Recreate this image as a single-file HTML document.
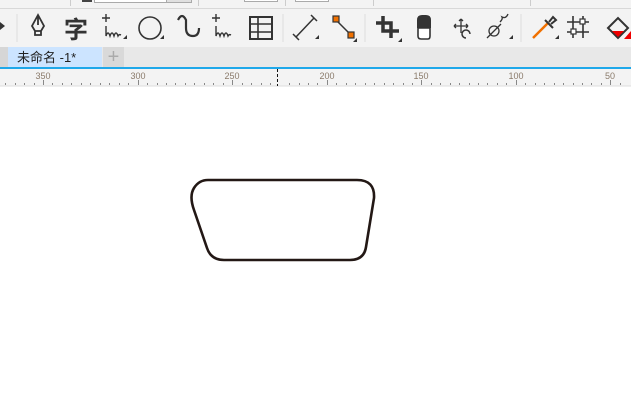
<!DOCTYPE html>
<html><head><meta charset="utf-8"><style>
body{margin:0;width:631px;height:416px;overflow:hidden;background:#fff;font-family:"Liberation Sans","Noto Sans CJK SC",sans-serif;position:relative}
.a{position:absolute}
</style></head><body>
<div class="a" style="left:0;top:0;width:631px;height:68px;background:#f3f3f3"></div>
<div class="a" style="left:0;top:8px;width:631px;height:1px;background:#d8d8d8"></div>
<div class="a" style="left:94px;top:0;width:72px;height:2px;background:#fff;border:1px solid #aaa;border-top:0"></div>
<div class="a" style="left:166px;top:0;width:24px;height:2px;background:#e0e0e0;border:1px solid #aaa;border-top:0"></div>
<div class="a" style="left:82px;top:0;width:10px;height:2px;background:#444"></div>
<div class="a" style="left:244px;top:0;width:32px;height:1px;background:#fff;border:1px solid #aaa;border-top:0"></div>
<div class="a" style="left:295px;top:0;width:32px;height:1px;background:#fff;border:1px solid #aaa;border-top:0"></div>
<div class="a" style="left:70px;top:0;width:1px;height:6px;background:#ccc"></div>
<div class="a" style="left:198px;top:0;width:1px;height:6px;background:#ccc"></div>
<div class="a" style="left:285px;top:0;width:1px;height:6px;background:#ccc"></div>
<div class="a" style="left:373px;top:0;width:1px;height:6px;background:#ccc"></div>
<div class="a" style="left:530px;top:0;width:1px;height:6px;background:#ccc"></div>
<svg class="a" style="left:0;top:9px" width="631" height="38" viewBox="0 9 631 38" fill="none" stroke="#333" stroke-width="2">
<path d="M0 22 L5 26 L0 30Z" fill="#333" stroke="none"/>
<line x1="17" y1="14" x2="17" y2="42" stroke="#ddd" stroke-width="1"/>
<path d="M38 15 L32 26 L35 31 L41 31 L44 26 Z M38 15 V25 M35 31 v4 h6 v-4" stroke-width="1.8"/>
<text x="64" y="38" font-size="24" font-weight="bold" fill="#333" stroke="none" font-family="Noto Sans CJK SC,sans-serif">字</text>
<path d="M106 14 v8 M102 18 h8 M106 26 v10 q2 -6 4 0 q2 -6 4 0 q2 -6 4 0 q1 -2 3 -1" stroke-width="1.4"/>
<path d="M123 39 l4 0 l0 -4z" fill="#333" stroke="none"/>
<circle cx="150" cy="28" r="11" stroke-width="1.6"/>
<path d="M160 39 l4 0 l0 -4z" fill="#333" stroke="none"/>
<path d="M178 20 q4 -8 8 0 v8 q0 8 7 8 q6 0 6 -8" stroke-width="2.2"/>
<path d="M216 14 v8 M212 18 h8 M216 26 v10 q2 -6 4 0 q2 -6 4 0 q2 -6 4 0 q1 -2 3 -1" stroke-width="1.4"/>
<rect x="250" y="17" width="22" height="22" stroke-width="2"/>
<path d="M250 24 h22 M250 32 h22 M258 17 v22" stroke-width="1.6"/>
<line x1="283" y1="14" x2="283" y2="42" stroke="#ddd" stroke-width="1"/>
<path d="M296 37 L314 18 M293 34 l6 6 M311 15 l6 6" stroke-width="1.5"/>
<path d="M315 39 l4 0 l0 -4z" fill="#333" stroke="none"/>
<path d="M337 21 L351 35" stroke-width="1.5"/>
<rect x="333" y="16" width="6" height="6" fill="#f07000" stroke-width="1.2"/>
<rect x="348" y="32" width="6" height="6" fill="#f07000" stroke-width="1.2"/>
<path d="M353 42 l4 0 l0 -4z" fill="#333" stroke="none"/>
<line x1="365" y1="14" x2="365" y2="42" stroke="#ddd" stroke-width="1"/>
<path d="M376 23 h15 v15 M383 16 v15 h16" stroke-width="3.5"/>
<path d="M398 42 l4 0 l0 -4z" fill="#333" stroke="none"/>
<path d="M417 28 v-8 q0 -5 5 -5 h4 q5 0 5 5 v8z" fill="#333" stroke="none"/>
<path d="M418 28 v8 q0 3 3 3 h7 q2 0 2 -3 v-8z" stroke-width="1.6" stroke="#333" fill="#fff"/>
<path d="M461 19 v14 M454 26 h14 M461 19 l-2 2 M461 19 l2 2 M454 26 l2 -2 M454 26 l2 2 M468 26 l-2 -2 M468 26 l-2 2" stroke-width="1.3"/>
<path d="M470 34 a4 4 0 1 0 -4 4" stroke-width="1.5"/>
<circle cx="494" cy="31" r="5" stroke-width="1.3"/>
<path d="M487 38 L501 24 M500 22 q3 -3 2 -5 q4 2 6 -3" stroke-width="1.3"/>
<path d="M509 39 l4 0 l0 -4z" fill="#333" stroke="none"/>
<line x1="521" y1="14" x2="521" y2="42" stroke="#ddd" stroke-width="1"/>
<path d="M533 38 L548 23" stroke="#f07000" stroke-width="2.5"/>
<path d="M545 20 l8 8 M549 22 l4 -5 l3 3 l-5 4" stroke-width="2"/>
<path d="M555 39 l4 0 l0 -4z" fill="#333" stroke="none"/>
<path d="M567 22 h22 M567 32 h22 M573 16 v22 M583 16 v22" stroke-width="1.6"/>
<rect x="580" y="19" width="5" height="5" fill="#fff" stroke-width="1.2"/>
<rect x="571" y="29" width="5" height="5" fill="#fff" stroke-width="1.2"/>
<path d="M608 28 L618 18 L628 28 L618 38 Z" stroke-width="2"/>
<path d="M612 31 h12 l-6 6z" fill="#e00" stroke="none"/>
<path d="M624 39 l7 -8 v8z" fill="#e00" stroke="none"/>
</svg>
<div class="a" style="left:0;top:47px;width:631px;height:21px;background:#e8e8e8"></div>
<div class="a" style="left:0;top:47px;width:8px;height:21px;background:#d6d6d6"></div>
<div class="a" style="left:8px;top:47px;width:94px;height:21px;background:#cce4ff;font-size:13px;line-height:21px;color:#222;text-indent:9px">未命名 -1*</div>
<div class="a" style="left:103px;top:47px;width:21px;height:21px;background:#d9d9d9;color:#aaa;font-size:20px;line-height:20px;text-align:center">+</div>
<div class="a" style="left:0;top:67px;width:631px;height:2px;background:#1fa8ea"></div>
<svg class="a" style="left:0;top:69px" width="631" height="18" viewBox="0 69 631 18">
<rect x="0" y="69" width="631" height="17" fill="#f3f3f3"/>
<line x1="0" y1="86" x2="631" y2="86" stroke="#ddd"/>
<g fill="#8a7a6a" font-size="9" text-anchor="middle" font-family="Liberation Sans,sans-serif">
<text x="43" y="79">350</text><text x="138" y="79">300</text><text x="232" y="79">250</text><text x="327" y="79">200</text><text x="421" y="79">150</text><text x="516" y="79">100</text><text x="610" y="79">50</text>
</g>
<g stroke="#888">
<path d="M43.5 80v5M138.5 80v5M232.5 80v5M327.5 80v5M421.5 80v5M516.5 80v5M610.5 80v5"/>
<path d="M5.5 83v2M15.5 83v2M24.5 83v2M34.5 83v2M52.5 83v2M62.5 83v2M71.5 83v2M81.5 83v2M90.5 83v2M100.5 83v2M109.5 83v2M119.5 83v2M128.5 83v2M147.5 83v2M157.5 83v2M166.5 83v2M175.5 83v2M185.5 83v2M194.5 83v2M204.5 83v2M213.5 83v2M223.5 83v2M242.5 83v2M251.5 83v2M261.5 83v2M270.5 83v2M289.5 83v2M299.5 83v2M308.5 83v2M317.5 83v2M336.5 83v2M346.5 83v2M355.5 83v2M365.5 83v2M374.5 83v2M384.5 83v2M393.5 83v2M403.5 83v2M412.5 83v2M431.5 83v2M440.5 83v2M450.5 83v2M459.5 83v2M469.5 83v2M478.5 83v2M487.5 83v2M497.5 83v2M506.5 83v2M525.5 83v2M535.5 83v2M544.5 83v2M554.5 83v2M563.5 83v2M573.5 83v2M582.5 83v2M591.5 83v2M601.5 83v2M620.5 83v2"/>
</g>
<path d="M277.5 69v17" stroke="#111" stroke-dasharray="3 2"/>
</svg>
<svg class="a" style="left:0;top:0" width="631" height="416">
<path d="M208 180 L357 180 Q375 180 374 198 L366 247 Q364 260 350 260 L224 260 Q211 260 207 248 L194 210 Q189 196 194 188 Q199 180 208 180 Z" fill="none" stroke="#231815" stroke-width="2.6"/>
</svg>
</body></html>
